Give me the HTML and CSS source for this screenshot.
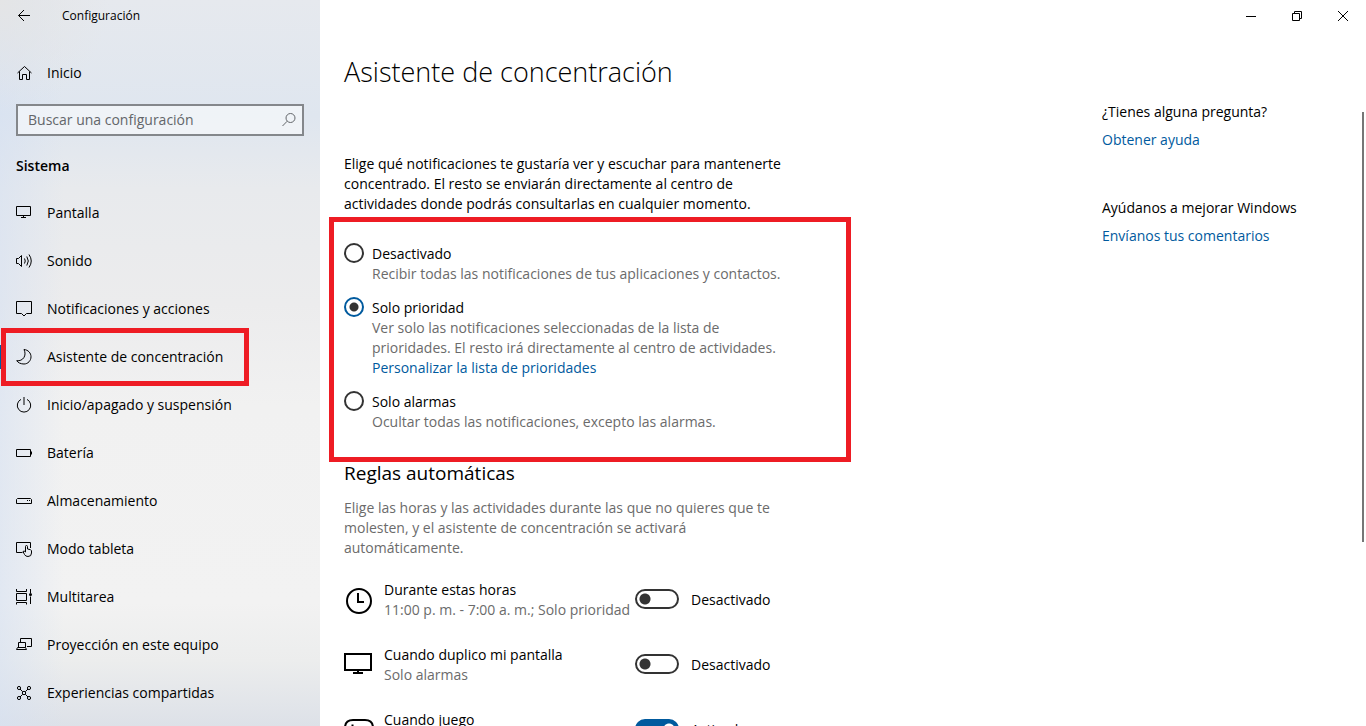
FILE: index.html
```
<!DOCTYPE html>
<html lang="es">
<head>
  <meta charset="UTF-8" />
  <meta name="viewport" content="width=device-width, initial-scale=1.0" />
  <title>Configuración</title>
  <link rel="stylesheet" href="styles.css">
</head>
<body>
  <aside class="sidebar">
    <div class="titlebar">
      <button class="back-btn" aria-label="Atrás">
        <svg class="icon" viewBox="0 0 16 16"><path d="M13 7.500H1.500M7 2L1.500 7.500 7 13" /></svg>
      </button>
      <span>Configuración</span>
    </div>

    <a class="nav-link home" href="#">
      <svg class="icon" viewBox="0 0 16 16"><path d="M1.500 8L8.500 1.500l7 6.500M3.500 6.500v8h3v-5h4v5h3v-8" /></svg>
      <span>Inicio</span>
    </a>

    <div class="search">
      <input type="text" placeholder="Buscar una configuración" aria-label="Buscar una configuración" />
      <svg class="icon" viewBox="0 0 16 16"><circle cx="9.500" cy="6" r="4.500" /><path d="M6.200 9.200L1.500 14" /></svg>
    </div>

    <h2>Sistema</h2>

    <nav>
      <a class="nav-link" href="#"><svg class="icon" viewBox="0 0 16 16"><path d="M.5 1.500h14v9H.5zM7.500 10.500v2M5 12.500h5" /></svg><span>Pantalla</span></a>
      <a class="nav-link" href="#"><svg class="icon" viewBox="0 0 16 16"><path d="M.5 5.500h2l3-3v11l-3-3h-2zM8.500 5.500q1.500 2.500 0 5M10.800 3.500q3 4.500 0 9M13 1.500q4.500 6.500 0 13" /></svg><span>Sonido</span></a>
      <a class="nav-link" href="#"><svg class="icon" viewBox="0 0 16 16"><path d="M.5.5h15v12h-5L8 15l-2.500-2.500h-5z" /></svg><span>Notificaciones y acciones</span></a>
      <a class="nav-link active" href="#"><svg class="icon" viewBox="0 0 16 16"><path d="M8 .5c4.200.4 7 3.500 7 7.300S12 15 8 15c-3.200 0-6-1.300-7.300-3.300C7 12.500 11 6.500 8 .5z" /></svg><span>Asistente de concentración</span></a>
      <a class="nav-link" href="#"><svg class="icon" viewBox="0 0 16 16"><path d="M5 2.400a6.700 6.700 0 1 0 6 0M8 0v8" /></svg><span>Inicio/apagado y suspensión</span></a>
      <a class="nav-link" href="#"><svg class="icon" viewBox="0 0 16 16"><path d="M.5 4.500h14v7H.5zM15.500 6.500v3" /></svg><span>Batería</span></a>
      <a class="nav-link" href="#"><svg class="icon" viewBox="0 0 16 16"><path d="M1.500 5.500h13l1 1v4H.5v-4zM11 7.500h1M13 7.500h1" /></svg><span>Almacenamiento</span></a>
      <a class="nav-link" href="#"><svg class="icon" viewBox="0 0 16 16"><path d="M6.500 11.500h-6v-10h14V7M9.500 11V5.500q0-1 1-1t1 1V8l3 .7 1 1V12q0 3.500-3.500 3.500-2.500 0-3.500-2L7 10.500q1-1.200 2.500.5" /></svg><span>Modo tableta</span></a>
      <a class="nav-link" href="#"><svg class="icon" viewBox="0 0 16 16"><path d="M.5 0v2.500h10V0M.5 4.500h10v7H.5zM.5 15.500v-2h10v2M14.500 0v4M14.500 7.500V15" /><circle class="dot" cx="14.500" cy="5.500" r="1.500" /></svg><span>Multitarea</span></a>
      <a class="nav-link" href="#"><svg class="icon" viewBox="0 0 16 16"><path d="M4.500 5V1.500h11v8H11M2.500 10.500v-5h7v5M.5 12.500l1-2h8l1 2z" /></svg><span>Proyección en este equipo</span></a>
      <a class="nav-link" href="#"><svg class="icon" viewBox="0 0 16 16"><circle cx="3" cy="3" r="1.600" /><circle cx="13" cy="3" r="1.600" /><circle cx="3" cy="13" r="1.600" /><circle cx="13" cy="13" r="1.600" /><path d="M4 4l2.700 2.700M12 4L9.300 6.700M4 12l2.700-2.700M12 12L9.300 9.300" /><circle cx="8" cy="8" r="1.700" /></svg><span>Experiencias compartidas</span></a>
    </nav>
  </aside>

  <main>
    <div class="window-controls">
      <button aria-label="Minimizar"><svg viewBox="0 0 10 10"><path d="M0 5.500h10" /></svg></button>
      <button aria-label="Restaurar"><svg viewBox="0 0 10 10"><path d="M.5 2.500h7v7h-7zM2.500 2.500v-2h7v7h-2" /></svg></button>
      <button aria-label="Cerrar"><svg viewBox="0 0 10 10"><path d="M0 0l10 10M10 0L0 10" /></svg></button>
    </div>

    <h1>Asistente de concentración</h1>

    <div class="columns">
      <div class="content">
        <p class="intro">Elige qué notificaciones te gustaría ver y escuchar para mantenerte concentrado. El resto se enviarán directamente al centro de actividades donde podrás consultarlas en cualquier momento.</p>

        <div class="options" role="radiogroup" aria-label="Asistente de concentración">
          <div class="option">
            <input type="radio" name="focus" id="off" />
            <div>
              <label for="off">Desactivado</label>
              <p>Recibir todas las notificaciones de tus aplicaciones y contactos.</p>
            </div>
          </div>
          <div class="option">
            <input type="radio" name="focus" id="priority" checked />
            <div>
              <label for="priority">Solo prioridad</label>
              <p>Ver solo las notificaciones seleccionadas de la lista de prioridades. El resto irá directamente al centro de actividades.</p>
              <a href="#">Personalizar la lista de prioridades</a>
            </div>
          </div>
          <div class="option">
            <input type="radio" name="focus" id="alarms" />
            <div>
              <label for="alarms">Solo alarmas</label>
              <p>Ocultar todas las notificaciones, excepto las alarmas.</p>
            </div>
          </div>
        </div>

        <h3>Reglas automáticas</h3>
        <p class="rules-text">Elige las horas y las actividades durante las que no quieres que te molesten, y el asistente de concentración se activará automáticamente.</p>

        <div class="rule">
          <svg class="rule-icon" viewBox="0 0 30 30"><circle cx="15" cy="16" r="12" /><path d="M14 8v9h6" /></svg>
          <div class="rule-name">
            <label for="hours">Durante estas horas</label>
            <p>11:00 p. m. - 7:00 a. m.; Solo prioridad</p>
          </div>
          <input type="checkbox" class="toggle" id="hours" />
          <span>Desactivado</span>
        </div>
        <div class="rule">
          <svg class="rule-icon" viewBox="0 0 30 30"><path d="M1 4h26v16H1zM14 20v3M9 23h10" /></svg>
          <div class="rule-name">
            <label for="screen">Cuando duplico mi pantalla</label>
            <p>Solo alarmas</p>
          </div>
          <input type="checkbox" class="toggle" id="screen" />
          <span>Desactivado</span>
        </div>
        <div class="rule">
          <svg class="rule-icon" viewBox="0 0 30 30"><path d="M9 5h12q8 0 8 8v5q0 6-4 6t-6-5h-8q-2 5-6 5t-4-6v-5q0-8 8-8zM6 12h5M8.500 9.500v5M19 12h5" /></svg>
          <div class="rule-name">
            <label for="game">Cuando juego</label>
            <p>Solo prioridad</p>
          </div>
          <input type="checkbox" class="toggle" id="game" checked />
          <span>Activado</span>
        </div>
      </div>

      <div class="help">
        <p>¿Tienes alguna pregunta?</p>
        <a href="#">Obtener ayuda</a>
        <p>Ayúdanos a mejorar Windows</p>
        <a href="#">Envíanos tus comentarios</a>
      </div>
    </div>
    <div class="scroll-thumb"></div>
  </main>
</body>
</html>
```

FILE: styles.css
```
*, *::before, *::after { box-sizing: border-box; }
body { margin: 0; height: 100vh; overflow: hidden; display: grid; grid-template-columns: 320px minmax(0, 1fr);
  font-family: "Open Sans", "Noto Sans", sans-serif; font-size: 14px; line-height: 20px; color: #000; background: #fff; }
h1, h2, h3, p { margin: 0; font-weight: 400; }
a { color: #005a9e; text-decoration: none; }
button { border: none; background: none; padding: 0; font: inherit; }
svg { fill: none; stroke: #000; display: block; flex-shrink: 0; }
.icon { width: 16px; height: 16px; }
.dot { fill: #000; stroke: none; }

/* sidebar */
.sidebar { overflow: hidden; background:
  radial-gradient(circle at 0 0, #e4e5e6, rgba(228,229,230,0) 110px),
  linear-gradient(to right, rgba(214,225,242,0.6), rgba(214,225,242,0) 20%),
  linear-gradient(#e6e9ee, #dfe6ef 16%, #e8eaed 26%, #ececed 42%, #f1f1f1 56%, #f2f2f2 83%, #eceded 91%, #dde1e8); }
.titlebar { display: flex; align-items: center; gap: 29px; height: 32px; padding-left: 17px; font-size: 12px; }
.back-btn { width: 16px; }
.nav-link { display: flex; align-items: center; gap: 15px; height: 48px; padding-left: 16px; color: #000; position: relative; }
.home { margin-top: 17px; }
.search { display: flex; align-items: center; height: 32px; margin: 7px 16px 0; padding-right: 5px;
  border: 2px solid #84878b; background: rgba(255,255,255,0.5); }
.search input { flex: 1; min-width: 0; border: none; outline: none; background: none; padding: 0 10px; font: inherit; }
.search input::placeholder { color: #63666a; opacity: 1; }
.search .icon { stroke: #63666a; }
.sidebar h2 { padding: 6px 16px 0; font-size: 14px; font-weight: 600; line-height: 47px; }
.active::before { content: ""; position: absolute; left: 0; top: 12px; width: 4px; height: 24px; background: #005a9e; }
.active::after { content: ""; position: absolute; left: 1px; top: -5px; width: 248px; height: 58px; border: 5px solid #ee1c24; }

/* main */
main { position: relative; overflow: hidden; padding-left: 24px; }
.window-controls { display: flex; justify-content: flex-end; }
.window-controls button { width: 46px; height: 32px; display: grid; place-items: center; }
.window-controls svg { width: 10px; height: 10px; }
h1 { margin-top: 20px; font-size: 27px; font-weight: 300; line-height: 40px; }
.columns { display: grid; grid-template-columns: minmax(0, 1fr) 264px; }
.content { padding-top: 62px; }
.intro, .rules-text { max-width: 456px; }
.options { display: flex; flex-direction: column; gap: 14px; max-width: 522px; margin: 3px 0 0 -15px; padding: 22px 50px 25px 10px; border: 5px solid #ee1c24; }
.option { display: flex; gap: 8px; }
.option label, .option a, .rule label { display: block; }
.option p, .rule p, .rules-text { color: #6b6b6b; }
.option input { appearance: none; flex-shrink: 0; width: 20px; height: 20px; margin: -1px 0 0; border: 2px solid #333; border-radius: 50%; }
.option input:checked { border-color: #005a9e; background: radial-gradient(circle, #333 4px, transparent 5px); }
h3 { font-size: 19px; line-height: 22px; }
.rules-text { margin-top: 14px; margin-bottom: 22px; }
.rule { display: flex; align-items: center; height: 40px; margin-bottom: 25px; }
.rule-icon { width: 30px; height: 30px; margin-right: 10px; stroke-width: 2; }
.rule-name { width: 251px; white-space: nowrap; }
.toggle { appearance: none; width: 44px; height: 20px; margin: 0 12px 2px 0; border: 2px solid #333; border-radius: 10px;
  background: radial-gradient(circle at 8px 8px, #333 5px, transparent 6px); }
.toggle:checked { border-color: #005a9e; background: radial-gradient(circle at 32px 8px, #fff 5px, #005a9e 6px); }
.help { padding-top: 10px; }
.help a { display: block; margin: 8px 0 48px; }
.scroll-thumb { position: absolute; top: 112px; right: 2px; width: 2px; height: 430px; background: #767676; }
```
